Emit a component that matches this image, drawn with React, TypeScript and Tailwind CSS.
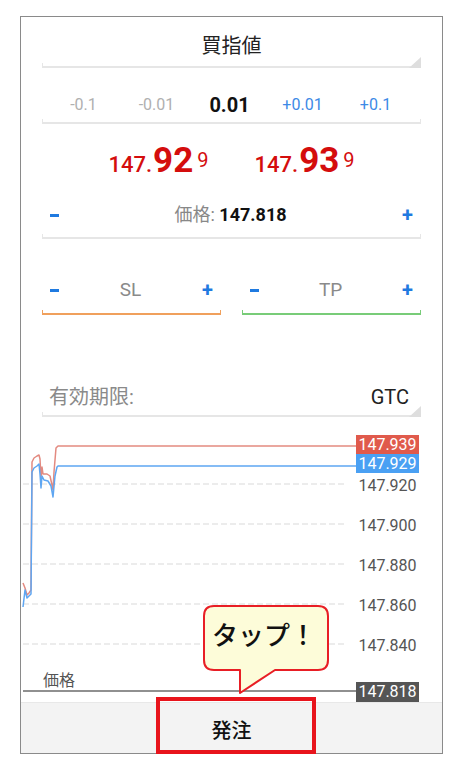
import React from "react";

// Pantalla de nuevo pedido (orden límite) con gráfico y llamada "タップ！"

const FONT = "font-['Roboto','Noto_Sans_CJK_JP',sans-serif]";

// Rejilla y etiquetas del eje de precios
const GRID = [
  { y: 484, label: "147.920" },
  { y: 524, label: "147.900" },
  { y: 564, label: "147.880" },
  { y: 604, label: "147.860" },
  { y: 644, label: "147.840" },
];

const RED_LINE =
  "23,583 25,588 27,595 29,593 31,590 32,462 34,458 37,456 39,455 40,459 41,478 42,467 43,474 47,474 50,476 52,485 53,490 54,472 56,448 58,446 356,446";
const BLUE_LINE =
  "23,607 25,590 27,598 29,596 31,594 32,472 34,468 37,466 39,464 40,474 41,488 42,476 44,480 48,481 51,486 53,497 55,476 57,467 58,466 356,466";

function Underline({ color = "border-[#e6e6e6]" }: { color?: string }) {
  return <div className={`h-[5px] border-x border-b-2 ${color}`} />;
}

function SpinnerCorner() {
  return (
    <div className="absolute right-0 bottom-0 w-[12px] h-[11px] bg-[#dedede] [clip-path:polygon(100%_0,100%_100%,0_100%)]" />
  );
}

function Minus() {
  return <div className="w-[9px] h-[3px] bg-[#1f7ae0]" />;
}

function Plus() {
  return <span className="text-[#1f7ae0] text-[20px] font-bold leading-none">+</span>;
}

function Price({ big }: { big: string }) {
  return (
    <div className="flex items-baseline text-[#d40d0d]">
      <span className="text-[22px] font-medium">147.</span>
      <span className="text-[35px] font-bold ml-[1px]">{big}</span>
      <span className="text-[20px] self-start mt-[-1px] ml-[4px]">9</span>
    </div>
  );
}

function Stepper({ label, color }: { label: string; color: string }) {
  return (
    <div className="w-[179px] flex flex-col">
      <div className="h-[24px] flex items-center justify-between px-[8px]">
        <Minus />
        <span className="text-[19px] text-[#8a8a8a] leading-[24px]">{label}</span>
        <Plus />
      </div>
      <div className="h-[8px]" />
      <Underline color={color} />
    </div>
  );
}

function Chart() {
  const toTop = (y: number) => `${y - 417}px`;
  return (
    <div className="relative h-[285px]">
      <svg className="absolute inset-0" width="421" height="285" viewBox="21 417 421 285">
        {GRID.map((g) => (
          <line key={g.y} x1="23" x2="344" y1={g.y} y2={g.y} stroke="#e6e6e6" strokeWidth="1.5" strokeDasharray="6 3" />
        ))}
        <line x1="23" x2="356" y1="691" y2="691" stroke="#6b6b6b" strokeWidth="1.5" />
        <polyline points={RED_LINE} fill="none" stroke="#e38a80" strokeWidth="1.5" strokeLinejoin="round" />
        <polyline points={BLUE_LINE} fill="none" stroke="#5ea6f2" strokeWidth="1.5" strokeLinejoin="round" />
      </svg>

      {GRID.map((g) => (
        <div
          key={g.label}
          className="absolute left-[335px] w-[63px] h-[20px] text-center text-[16px] leading-[20px] text-[#555]"
          style={{ top: toTop(g.y - 8) }}
        >
          {g.label}
        </div>
      ))}

      <div className="absolute left-[335px] top-[18px] w-[63px] h-[19px] bg-[#e05a4c] text-white text-[16px] leading-[19px] text-center">
        147.939
      </div>
      <div className="absolute left-[335px] top-[37px] w-[63px] h-[19px] bg-[#4aa0f3] text-white text-[16px] leading-[19px] text-center">
        147.929
      </div>
      <div className="absolute left-[335px] top-[265px] w-[63px] h-[20px] bg-[#555] text-white text-[16px] leading-[20px] text-center">
        147.818
      </div>
      <div className="absolute left-[22px] top-[254px] text-[16px] leading-[20px] text-[#555]">価格</div>
    </div>
  );
}

export default function App() {
  return (
    <div className={`relative w-[464px] h-[766px] bg-white pt-[16px] pl-[20px] ${FONT}`}>
      {/* Marco de la pantalla */}
      <div className="w-[423px] h-[738px] border border-[#8a8a8a] flex flex-col">
        <div className="px-[21px] flex flex-col">
          {/* Tipo de orden */}
          <div className="relative">
            <div className="h-[46px] pt-[17px] text-center text-[20px] leading-[24px] text-[#222]">買指値</div>
            <Underline />
            <SpinnerCorner />
          </div>

          {/* Pasos de volumen */}
          <div className="h-[51px] pt-[27px] flex justify-center pr-[4px] text-[16px] leading-[20px]">
            <span className="w-[73px] text-center text-[#b0b0b0]">-0.1</span>
            <span className="w-[73px] text-center text-[#b0b0b0]">-0.01</span>
            <span className="w-[73px] text-center text-[#111] font-bold text-[20px]">0.01</span>
            <span className="w-[73px] text-center text-[#3d8ae6]">+0.01</span>
            <span className="w-[73px] text-center text-[#3d8ae6]">+0.1</span>
          </div>
          <Underline />

          {/* Bid / Ask */}
          <div className="h-[64px] pt-[17px] flex justify-center gap-[46px] leading-[40px]">
            <Price big="92" />
            <Price big="93" />
          </div>

          {/* Precio */}
          <div className="h-[46px] pt-[15px]">
            <div className="h-[24px] flex items-center justify-between px-[8px]">
              <Minus />
              <div className="text-[18px] leading-[24px]">
                <span className="text-[#888]">価格: </span>
                <span className="text-[#111] font-bold">147.818</span>
              </div>
              <Plus />
            </div>
          </div>
          <Underline />

          {/* SL / TP */}
          <div className="pt-[39px] flex justify-between">
            <Stepper label="SL" color="border-[#f0a05c]" />
            <Stepper label="TP" color="border-[#78cc78]" />
          </div>

          {/* Vencimiento */}
          <div className="relative pt-[69px]">
            <div className="h-[26px] flex items-center justify-between pl-[7px] pr-[12px] text-[20px] leading-[26px]">
              <span className="text-[#8a8a8a]">有効期限:</span>
              <span className="text-[#222]">GTC</span>
            </div>
            <div className="h-[2px]" />
            <Underline />
            <SpinnerCorner />
          </div>
        </div>

        <Chart />

        {/* Botón de envío */}
        <div className="h-[51px] bg-[#f3f3f3] border-t border-[#e8e8e8] flex items-center justify-center pt-[6px] text-[20px] font-medium text-[#111]">
          発注
        </div>
      </div>

      {/* Resaltado del botón */}
      <div className="absolute left-[156px] top-[697px] w-[160px] h-[57px] border-[4px] border-[#e8141c]" />

      {/* Globo "タップ！" */}
      <div className="absolute left-[203px] top-[605px] w-[126px] h-[89px]">
        <svg className="absolute inset-0" width="126" height="89" viewBox="0 0 126 89">
          <path
            d="M 11 1 H 115 Q 125 1 125 11 V 55 Q 125 65 115 65 H 72 L 37 88 V 65 H 11 Q 1 65 1 55 V 11 Q 1 1 11 1 Z"
            fill="#fdfcd9"
            stroke="#e81e25"
            strokeWidth="2"
            strokeLinejoin="round"
          />
        </svg>
        <div className="absolute left-[9px] top-[15px] text-[26px] leading-[32px] font-medium text-[#111] whitespace-nowrap">
          タップ！
        </div>
      </div>
    </div>
  );
}
